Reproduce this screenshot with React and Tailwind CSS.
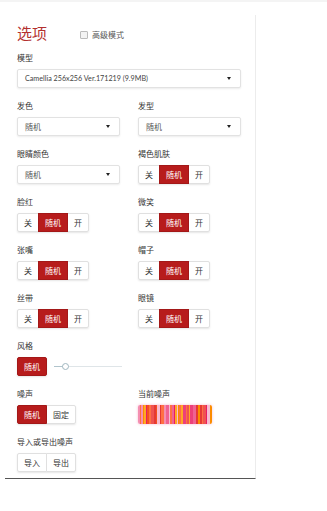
import React from 'react';

const cjk = { fontFamily: '"Noto Sans CJK SC", "Noto Sans", sans-serif' };

const Caret = () => (
    <span className="w-0 h-0 border-l-[2.5px] border-r-[2.5px] border-t-[3px] border-l-transparent border-r-transparent border-t-[#222]" />
);

const Select = ({ value, latin }) => (
    <div className="h-[19px] flex items-center justify-between pl-[7px] pr-[9px] bg-white border border-[#e2e2e2] rounded-[2px] shadow-[0_1px_2px_rgba(0,0,0,0.08)]">
        <span
            className={latin ? 'text-[7.2px] text-[#444]' : 'text-[8px] text-[#555]'}
            style={latin ? { fontFamily: 'Lato, "Noto Sans", sans-serif' } : undefined}
        >
            {value}
        </span>
        <Caret />
    </div>
);

const Group = ({ items, active }) => (
    <div className="flex">
        <div className="flex h-[19px] rounded-[2px] shadow-[0_1px_2px_rgba(0,0,0,0.1)]">
            {items.map((item, i) => (
                <span
                    key={item}
                    className={
                        'flex items-center px-[6px] text-[8px] leading-none border ' +
                        (i > 0 ? '-ml-px ' : '') +
                        (i === 0 ? 'rounded-l-[2px] ' : '') +
                        (i === items.length - 1 ? 'rounded-r-[2px] ' : '') +
                        (item === active
                            ? 'bg-[#b71c1c] border-[#a31818] text-white relative'
                            : 'bg-white border-[#e0e0e0] text-[#333]')
                    }
                >
                    {item}
                </span>
            ))}
        </div>
    </div>
);

const Field = ({ label, children }) => (
    <div className="flex flex-col">
        <div className="h-[12px] leading-[12px] text-[8px] text-[#333] mb-[5.5px]">{label}</div>
        {children}
    </div>
);

const tri = ['关', '随机', '开'];

const noiseColors = ['#f4511e', '#ef5350', '#ff7043', '#f06292', '#ffa726', '#e53935', '#f48fb1', '#ec407a', '#ff8a65', '#e91e63', '#fb8c00', '#f8bbd0'];

const NoiseBar = () => {
    let seed = 7;
    const rand = () => {
        seed = (seed * 9301 + 49297) % 233280;
        return seed / 233280;
    };
    const stripes = [];
    let total = 0;
    while (total < 74) {
        const w = 1 + Math.floor(rand() * 3);
        stripes.push({ w, c: noiseColors[Math.floor(rand() * noiseColors.length)] });
        total += w;
    }
    return (
        <div className="flex w-[74px] h-[19px] rounded-[2px] overflow-hidden shadow-[0_0_3px_rgba(244,143,177,0.6)]">
            {stripes.map((s, i) => (
                <span key={i} className="h-full shrink-0" style={{ width: s.w, background: s.c }} />
            ))}
        </div>
    );
};

const Slider = () => (
    <div className="relative w-[68px] h-[19px] flex items-center">
        <div className="w-full h-[1.5px] bg-[#dfe5e8]" />
        <div className="absolute left-0 w-[10px] h-[1.5px] bg-[#b0c4cc]" />
        <div className="absolute left-[8px] w-[7px] h-[7px] rounded-full bg-white border border-[#9fb6bf]" />
    </div>
);

export default function App() {
    return (
        <div className="w-[327px] h-[511px] bg-white border-t-2 border-[#f4f4f4] leading-none" style={cjk}>
            <div className="ml-[5px] mt-[13px] w-[251px] pl-[12px] pr-[14px] pt-[9px] pb-[6px] border-r border-[#ececec] border-b border-b-[#555]">
                <div className="flex items-center mb-[9.5px]">
                    <h1 className="text-[15px] leading-[18px] text-[#b3302f] font-normal">选项</h1>
                    <label className="flex items-center ml-[33px] mt-[3px]">
                        <span className="w-[8px] h-[8px] border border-[#bbb] bg-[#f3f3f3] rounded-[1px]" />
                        <span className="ml-[4px] text-[8px] text-[#555]">高级模式</span>
                    </label>
                </div>

                <div className="flex flex-col gap-y-[11.5px]">
                    <Field label="模型">
                        <Select value="Camellia 256x256 Ver.171219 (9.9MB)" latin />
                    </Field>

                    <div className="grid grid-cols-2 gap-x-[18px] gap-y-[11.5px]">
                        <Field label="发色">
                            <Select value="随机" />
                        </Field>
                        <Field label="发型">
                            <Select value="随机" />
                        </Field>
                        <Field label="眼睛颜色">
                            <Select value="随机" />
                        </Field>
                        <Field label="褐色肌肤">
                            <Group items={tri} active="随机" />
                        </Field>
                        <Field label="脸红">
                            <Group items={tri} active="随机" />
                        </Field>
                        <Field label="微笑">
                            <Group items={tri} active="随机" />
                        </Field>
                        <Field label="张嘴">
                            <Group items={tri} active="随机" />
                        </Field>
                        <Field label="帽子">
                            <Group items={tri} active="随机" />
                        </Field>
                        <Field label="丝带">
                            <Group items={tri} active="随机" />
                        </Field>
                        <Field label="眼镜">
                            <Group items={tri} active="随机" />
                        </Field>
                        <div className="col-span-2">
                            <Field label="风格">
                                <div className="flex items-center gap-[7px]">
                                    <Group items={['随机']} active="随机" />
                                    <Slider />
                                </div>
                            </Field>
                        </div>
                        <Field label="噪声">
                            <Group items={['随机', '固定']} active="随机" />
                        </Field>
                        <Field label="当前噪声">
                            <NoiseBar />
                        </Field>
                        <div className="col-span-2">
                            <Field label="导入或导出噪声">
                                <Group items={['导入', '导出']} active={null} />
                            </Field>
                        </div>
                    </div>
                </div>
            </div>
        </div>
    );
}
